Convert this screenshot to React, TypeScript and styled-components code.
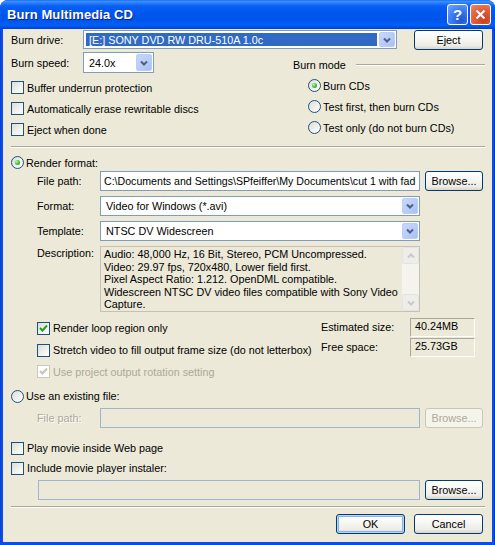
import React from "react";
import styled, { createGlobalStyle } from "styled-components";

const GlobalStyle = createGlobalStyle`
  html, body {
    margin: 0;
    padding: 0;
    background: #ffffff;
  }
  body {
    font-family: "Liberation Sans", Arial, sans-serif;
    font-size: 10.8px;
    color: #000;
  }
  * {
    box-sizing: border-box;
  }
`;

const Frame = styled.div`
  width: 495px;
  height: 545px;
  display: flex;
  flex-direction: column;
  background: linear-gradient(to right, #0831d9 0px, #0a4de8 1px, #0a4de8 494px, #001ea0 495px);
  border-radius: 8px 8px 0 0;
  overflow: hidden;
`;

const TitleBar = styled.div`
  height: 29px;
  flex: none;
  display: flex;
  align-items: center;
  padding: 0 4px 0 7px;
  background: linear-gradient(
    to bottom,
    #0a5cf6 0px,
    #3d95ff 1px,
    #2a7cfc 3px,
    #0a5ff4 6px,
    #0058ee 12px,
    #0054ea 20px,
    #0060f7 25px,
    #0049dc 28px,
    #003dcf 29px
  );
`;

const Title = styled.span`
  flex: 1;
  color: #ffffff;
  font: bold 13px "Liberation Sans", Arial, sans-serif;
  text-shadow: 1px 1px 0 #0f1f8f;
  letter-spacing: 0.1px;
`;

const CaptionButton = styled.div<{ $close?: boolean }>`
  width: 21px;
  height: 21px;
  border: 1px solid #ffffff;
  border-radius: 3px;
  display: flex;
  align-items: center;
  justify-content: center;
  color: #fff;
  font: bold 15px "Liberation Sans", Arial, sans-serif;
  background: ${(p) =>
    p.$close
      ? "radial-gradient(circle at 70% 80%, #c8411b 0%, #e2603c 55%, #f08a6c 100%)"
      : "radial-gradient(circle at 70% 80%, #1e55d8 0%, #3f7ff5 55%, #79a8fa 100%)"};
  & + & {
    margin-left: 2px;
  }
`;

const Client = styled.div`
  flex: 1;
  margin: 0 3px 3px;
  background: #ece9d8;
  padding: 0 9px 0 8px;
  display: flex;
  flex-direction: column;
`;

const Row = styled.div<{ $h?: number; $mt?: number; $indent?: number; $top?: boolean }>`
  display: flex;
  align-items: ${(p) => (p.$top ? "flex-start" : "center")};
  height: ${(p) => (p.$h ? `${p.$h}px` : "auto")};
  margin-top: ${(p) => p.$mt ?? 0}px;
  padding-left: ${(p) => p.$indent ?? 0}px;
  flex: none;
`;

const Spacer = styled.div`
  flex: 1;
`;

const Label = styled.span<{ $w?: number; $disabled?: boolean; $pt?: number }>`
  width: ${(p) => (p.$w ? `${p.$w}px` : "auto")};
  flex: none;
  white-space: nowrap;
  padding-top: ${(p) => p.$pt ?? 0}px;
  color: ${(p) => (p.$disabled ? "#aca899" : "#000")};
  text-shadow: ${(p) => (p.$disabled ? "1px 1px 0 #ffffff" : "none")};
`;

/* combo box */
const ComboFrame = styled.div<{ $w: number; $h: number }>`
  width: ${(p) => p.$w}px;
  height: ${(p) => p.$h}px;
  flex: none;
  border: 1px solid #7f9db9;
  background: #ffffff;
  display: flex;
  align-items: stretch;
  padding: 1px;
`;

const ComboValue = styled.div<{ $selected?: boolean }>`
  flex: 1;
  display: flex;
  align-items: center;
  padding-left: 3px;
  margin: 1px 2px 1px 1px;
  white-space: nowrap;
  overflow: hidden;
  background: ${(p) => (p.$selected ? "#316ac5" : "transparent")};
  color: ${(p) => (p.$selected ? "#ffffff" : "#000")};
`;

const DropButton = styled.div`
  width: 16px;
  flex: none;
  border: 1px solid #b9cdf8;
  border-radius: 2px;
  background: linear-gradient(135deg, #c8d8fd 0%, #b6cbf7 60%, #a9bff2 100%);
  display: flex;
  align-items: center;
  justify-content: center;
`;

const Chevron = ({ up, color = "#4d6185" }: { up?: boolean; color?: string }) => (
  <svg width="8" height="6" viewBox="0 0 8 6">
    <path
      d={up ? "M1 4.5 L4 1.5 L7 4.5" : "M1 1.5 L4 4.5 L7 1.5"}
      fill="none"
      stroke={color}
      strokeWidth="2"
    />
  </svg>
);

const Combo = ({ w, h = 20, value, selected }: { w: number; h?: number; value: string; selected?: boolean }) => (
  <ComboFrame $w={w} $h={h}>
    <ComboValue $selected={selected}>{value}</ComboValue>
    <DropButton>
      <Chevron />
    </DropButton>
  </ComboFrame>
);

const TextBox = styled.div<{ $w: number; $disabled?: boolean }>`
  width: ${(p) => p.$w}px;
  height: 20px;
  flex: none;
  border: 1px solid ${(p) => (p.$disabled ? "#9fb5cf" : "#7f9db9")};
  background: ${(p) => (p.$disabled ? "#ece9d8" : "#ffffff")};
  padding-left: 3px;
  display: flex;
  align-items: center;
  white-space: nowrap;
  overflow: hidden;
  font-size: 10.6px;
`;

const Button = styled.div<{ $w: number; $default?: boolean; $disabled?: boolean; $ml?: number }>`
  width: ${(p) => p.$w}px;
  height: 20px;
  flex: none;
  margin-left: ${(p) => p.$ml ?? 0}px;
  display: flex;
  align-items: center;
  justify-content: center;
  border: 1px solid ${(p) => (p.$disabled ? "#c9c7ba" : "#003c74")};
  border-radius: 3px;
  color: ${(p) => (p.$disabled ? "#aca899" : "#000")};
  background: ${(p) =>
    p.$disabled
      ? "#f5f4ea"
      : "linear-gradient(to bottom, #ffffff 0%, #f7f7f4 40%, #eeede6 80%, #d8d4c8 100%)"};
  box-shadow: ${(p) =>
    p.$default ? "inset 0 0 0 1px #b8d3f8, inset 0 0 0 2px #8db2ea" : "none"};
`;

/* check box */
const CheckRow = styled.div<{ $disabled?: boolean; $gap?: number }>`
  display: flex;
  align-items: center;
  gap: ${(p) => p.$gap ?? 3}px;
  white-space: nowrap;
  color: ${(p) => (p.$disabled ? "#aca899" : "#000")};
`;

const CheckBox = styled.span<{ $disabled?: boolean }>`
  width: 13px;
  height: 13px;
  flex: none;
  border: 1px solid ${(p) => (p.$disabled ? "#cac8bb" : "#1c5180")};
  background: ${(p) =>
    p.$disabled ? "#ffffff" : "linear-gradient(135deg, #dcdcd7 0%, #f2f2ee 60%, #ffffff 100%)"};
  display: flex;
  align-items: center;
  justify-content: center;
`;

const Check = ({ color }: { color: string }) => (
  <svg width="9" height="9" viewBox="0 0 9 9">
    <path d="M1 4 L3.5 6.5 L8 1.5" fill="none" stroke={color} strokeWidth="2" />
  </svg>
);

const CheckOption = ({ label, checked, disabled }: { label: string; checked?: boolean; disabled?: boolean }) => (
  <CheckRow $disabled={disabled}>
    <CheckBox $disabled={disabled}>{checked && <Check color={disabled ? "#c6c3b5" : "#21a121"} />}</CheckBox>
    {label}
  </CheckRow>
);

/* radio */
const RadioCircle = styled.span`
  width: 13px;
  height: 13px;
  flex: none;
  border-radius: 50%;
  border: 1px solid #1c5180;
  background: linear-gradient(135deg, #dcdcd7 0%, #f2f2ee 60%, #ffffff 100%);
  display: flex;
  align-items: center;
  justify-content: center;
`;

const RadioDot = styled.span`
  width: 5px;
  height: 5px;
  border-radius: 50%;
  background: radial-gradient(circle at 35% 35%, #c4f7b4 0%, #4fc43a 45%, #1f8e1f 100%);
`;

const RadioOption = ({ label, checked }: { label: string; checked?: boolean }) => (
  <CheckRow $gap={2}>
    <RadioCircle>{checked && <RadioDot />}</RadioCircle>
    {label}
  </CheckRow>
);

const Separator = styled.div<{ $mt: number }>`
  height: 2px;
  flex: none;
  margin-top: ${(p) => p.$mt}px;
  margin-right: -2px;
  border-top: 1px solid #aca899;
  border-bottom: 1px solid #ffffff;
`;

const Split = styled.div<{ $mt?: number }>`
  display: flex;
  flex: none;
  margin-top: ${(p) => p.$mt ?? 0}px;
`;

const Column = styled.div<{ $w?: number; $indent?: number }>`
  display: flex;
  flex-direction: column;
  width: ${(p) => (p.$w ? `${p.$w}px` : "auto")};
  flex: ${(p) => (p.$w ? "none" : "1")};
  padding-left: ${(p) => p.$indent ?? 0}px;
`;

const GroupHeader = styled.div<{ $mt: number }>`
  display: flex;
  align-items: center;
  gap: 10px;
  height: 14px;
  margin-top: ${(p) => p.$mt}px;
  margin-right: -2px;
`;

const GroupLine = styled.div`
  flex: 1;
  height: 2px;
  border-top: 1px solid #aca899;
  border-bottom: 1px solid #ffffff;
`;

const DescBox = styled.div`
  width: 320px;
  height: 66px;
  flex: none;
  display: flex;
  border: 1px solid #c5c2b2;
  background: #ece9d8;
`;

const DescText = styled.div`
  flex: 1;
  padding: 1px 3px;
  line-height: 12.5px;
  overflow: hidden;
`;

const ScrollBar = styled.div`
  width: 17px;
  flex: none;
  display: flex;
  flex-direction: column;
  justify-content: space-between;
  background: #f4f3ee;
`;

const ScrollArrow = styled.div`
  height: 17px;
  border: 1px solid #e1e4ec;
  border-radius: 2px;
  background: #eeede6;
  display: flex;
  align-items: center;
  justify-content: center;
`;

const StatRow = styled.div<{ $mt?: number }>`
  display: flex;
  height: 20px;
  margin-top: ${(p) => p.$mt ?? 0}px;
`;

const StatLabel = styled.span`
  width: 89px;
  flex: none;
  padding-top: 3px;
  white-space: nowrap;
`;

const StatBox = styled.div`
  width: 65px;
  height: 19px;
  border: 1px solid;
  border-color: #aca899 #ffffff #ffffff #aca899;
  padding: 0 0 0 4px;
  line-height: 14px;
`;

export default function App() {
  return (
    <>
      <GlobalStyle />
      <Frame>
        <TitleBar>
          <Title>Burn Multimedia CD</Title>
          <CaptionButton>?</CaptionButton>
          <CaptionButton $close>
            <svg width="11" height="11" viewBox="0 0 11 11">
              <path d="M1.5 1.5 L9.5 9.5 M9.5 1.5 L1.5 9.5" stroke="#fff" strokeWidth="2.2" />
            </svg>
          </CaptionButton>
        </TitleBar>
        <Client>
          <Row $h={21}>
            <Label $w={72}>Burn drive:</Label>
            <Combo w={314} h={19} value="[E:] SONY DVD RW DRU-510A 1.0c" selected />
            <Spacer />
            <Button $w={69}>Eject</Button>
          </Row>

          <Split>
            <Column $w={282}>
              <Row $h={21} $mt={2}>
                <Label $w={72}>Burn speed:</Label>
                <Combo w={71} h={21} value="24.0x" />
              </Row>
              <Row $h={21} $mt={4}>
                <CheckOption label="Buffer underrun protection" />
              </Row>
              <Row $h={21}>
                <CheckOption label="Automatically erase rewritable discs" />
              </Row>
              <Row $h={21}>
                <CheckOption label="Eject when done" />
              </Row>
            </Column>
            <Column>
              <GroupHeader $mt={8}>
                <span>Burn mode</span>
                <GroupLine />
              </GroupHeader>
              <Row $h={21} $mt={3} $indent={15}>
                <RadioOption label="Burn CDs" checked />
              </Row>
              <Row $h={21} $indent={15}>
                <RadioOption label="Test first, then burn CDs" />
              </Row>
              <Row $h={21} $indent={15}>
                <RadioOption label="Test only (do not burn CDs)" />
              </Row>
            </Column>
          </Split>

          <Separator $mt={6} />

          <Row $h={17} $mt={6}>
            <RadioOption label="Render format:" checked />
          </Row>
          <Row $h={20} $indent={26}>
            <Label $w={63}>File path:</Label>
            <TextBox $w={320}>C:\Documents and Settings\SPfeiffer\My Documents\cut 1 with fad</TextBox>
            <Button $w={58} $ml={5}>Browse...</Button>
          </Row>
          <Row $h={20} $mt={5} $indent={26}>
            <Label $w={63}>Format:</Label>
            <Combo w={320} value="Video for Windows (*.avi)" />
          </Row>
          <Row $h={20} $mt={5} $indent={26}>
            <Label $w={63}>Template:</Label>
            <Combo w={320} value="NTSC DV Widescreen" />
          </Row>
          <Row $mt={5} $indent={26} $top>
            <Label $w={63} $pt={1}>Description:</Label>
            <DescBox>
              <DescText>
                Audio: 48,000 Hz, 16 Bit, Stereo, PCM Uncompressed.
                <br />
                Video: 29.97 fps, 720x480, Lower field first.
                <br />
                Pixel Aspect Ratio: 1.212. OpenDML compatible.
                <br />
                Widescreen NTSC DV video files compatible with Sony Video Capture.
              </DescText>
              <ScrollBar>
                <ScrollArrow>
                  <Chevron up color="#c3c9d6" />
                </ScrollArrow>
                <ScrollArrow>
                  <Chevron color="#c3c9d6" />
                </ScrollArrow>
              </ScrollBar>
            </DescBox>
          </Row>

          <Split $mt={5}>
            <Column $w={310} $indent={26}>
              <Row $h={22}>
                <CheckOption label="Render loop region only" checked />
              </Row>
              <Row $h={22}>
                <CheckOption label="Stretch video to fill output frame size (do not letterbox)" />
              </Row>
              <Row $h={21}>
                <CheckOption label="Use project output rotation setting" checked disabled />
              </Row>
            </Column>
            <Column>
              <StatRow $mt={1}>
                <StatLabel>Estimated size:</StatLabel>
                <StatBox>40.24MB</StatBox>
              </StatRow>
              <StatRow>
                <StatLabel>Free space:</StatLabel>
                <StatBox>25.73GB</StatBox>
              </StatRow>
            </Column>
          </Split>

          <Row $h={20} $mt={4}>
            <RadioOption label="Use an existing file:" />
          </Row>
          <Row $h={20} $mt={2} $indent={26}>
            <Label $w={63} $disabled>
              File path:
            </Label>
            <TextBox $w={320} $disabled />
            <Button $w={58} $ml={5} $disabled>
              Browse...
            </Button>
          </Row>

          <Row $h={20} $mt={10}>
            <CheckOption label="Play movie inside Web page" />
          </Row>
          <Row $h={20}>
            <CheckOption label="Include movie player instaler:" />
          </Row>
          <Row $h={20} $mt={2} $indent={27}>
            <TextBox $w={382} $disabled />
            <Button $w={58} $ml={5}>Browse...</Button>
          </Row>

          <Separator $mt={6} />

          <Row $h={20} $mt={6}>
            <Spacer />
            <Button $w={69} $default>
              OK
            </Button>
            <Button $w={69} $ml={9}>
              Cancel
            </Button>
          </Row>
        </Client>
      </Frame>
    </>
  );
}
